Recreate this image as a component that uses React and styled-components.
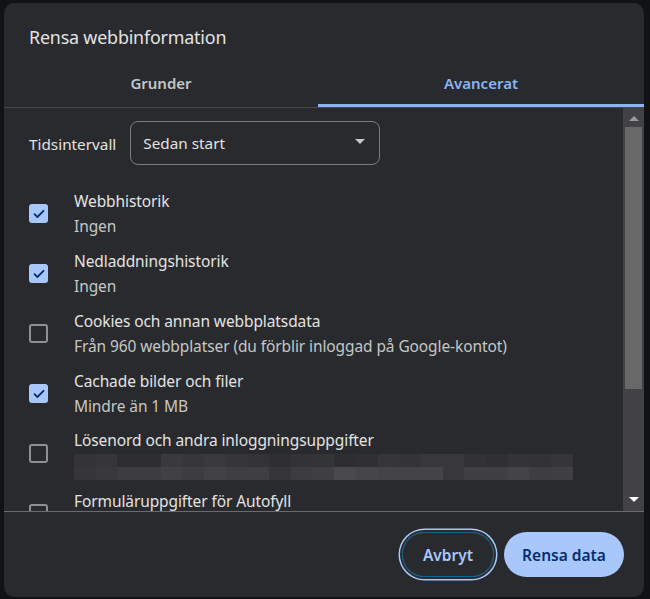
import React from "react";
import styled, { createGlobalStyle } from "styled-components";

const GlobalStyle = createGlobalStyle`
  html, body {
    margin: 0;
    padding: 0;
    background: #111213;
    font-family: "Noto Sans", "Open Sans", Arial, sans-serif;
  }
`;

const items = [
  { title: "Webbhistorik", sub: "Ingen", checked: true },
  { title: "Nedladdningshistorik", sub: "Ingen", checked: true },
  {
    title: "Cookies och annan webbplatsdata",
    sub: "Från 960 webbplatser (du förblir inloggad på Google-kontot)",
    checked: false,
  },
  { title: "Cachade bilder och filer", sub: "Mindre än 1 MB", checked: true },
  { title: "Lösenord och andra inloggningsuppgifter", redacted: true, checked: false },
  { title: "Formuläruppgifter för Autofyll", sub: "", checked: false },
];

// shades for the pixelated (redacted) line
const pixelRows = [
  [0x34, 0x36, 0x2e, 0x2e, 0x3a, 0x37, 0x3a, 0x36, 0x34, 0x2f, 0x33, 0x34, 0x2e, 0x30, 0x36, 0x34, 0x38, 0x38, 0x32, 0x30, 0x34, 0x33, 0x36],
  [0x36, 0x39, 0x3d, 0x3d, 0x41, 0x3d, 0x42, 0x3f, 0x3f, 0x36, 0x3d, 0x3f, 0x4a, 0x46, 0x44, 0x43, 0x44, 0x38, 0x40, 0x40, 0x44, 0x3e, 0x40],
];

const Check = () => (
  <svg width="12" height="10" viewBox="0 0 12 10">
    <path d="M1.5 5.2 L4.4 8 L10.5 1.8" fill="none" stroke="#062e6f" strokeWidth="1.8" strokeLinecap="round" strokeLinejoin="round" />
  </svg>
);

const App = () => {
  return (
    <>
      <GlobalStyle />
      <Screen>
        <Dialog>
          <Title>Rensa webbinformation</Title>
          <Tabs>
            <Tab>Grunder</Tab>
            <Tab active>Avancerat</Tab>
          </Tabs>
          <Body>
            <Scroll>
              <RangeRow>
                <RangeLabel>Tidsintervall</RangeLabel>
                <Select>
                  <span>Sedan start</span>
                  <Caret />
                </Select>
              </RangeRow>
              {items.map((it) => (
                <Item key={it.title}>
                  <Box checked={it.checked}>{it.checked && <Check />}</Box>
                  <Texts>
                    <ItemTitle>{it.title}</ItemTitle>
                    {it.redacted ? (
                      <Pixels>
                        {pixelRows.map((row, r) => (
                          <PixelRow key={r}>
                            {row.map((v, i) => (
                              <Pixel key={i} style={{ background: `rgb(${v},${v},${v + 3})` }} />
                            ))}
                          </PixelRow>
                        ))}
                      </Pixels>
                    ) : (
                      <ItemSub>{it.sub}</ItemSub>
                    )}
                  </Texts>
                </Item>
              ))}
            </Scroll>
            <Scrollbar>
              <Arrow />
              <Track>
                <Thumb />
              </Track>
              <Arrow down />
            </Scrollbar>
          </Body>
          <Footer>
            <CancelButton>Avbryt</CancelButton>
            <PrimaryButton>Rensa data</PrimaryButton>
          </Footer>
        </Dialog>
      </Screen>
    </>
  );
};

export default App;

const Screen = styled.div`
  width: 650px;
  height: 599px;
  overflow: hidden;
  padding: 3px 0 0 4px;
  box-sizing: border-box;
`;

const Dialog = styled.div`
  width: 640px;
  height: 594px;
  background: #292a2d;
  border-radius: 10px;
  display: flex;
  flex-direction: column;
  overflow: hidden;
`;

const Title = styled.div`
  height: 62px;
  box-sizing: border-box;
  padding: 22px 0 0 25px;
  font-size: 17.9px;
  color: #e3e3e3;
  letter-spacing: -0.2px;
`;

const Tabs = styled.div`
  display: grid;
  grid-template-columns: 314px 1fr;
  height: 42px;
  border-bottom: 1px solid #47484b;
`;

const Tab = styled.div`
  display: flex;
  align-items: center;
  justify-content: center;
  font-size: 15px;
  font-weight: 600;
  color: ${(p) => (p.active ? "#8ab4f8" : "#c4c7c5")};
  border-bottom: 3px solid ${(p) => (p.active ? "#8ab4f8" : "transparent")};
  padding-bottom: 3px;
`;

const Body = styled.div`
  display: flex;
  height: 403px;
  border-bottom: 1px solid #6a6b6e;
`;

const Scroll = styled.div`
  flex: 1;
  overflow: hidden;
  padding: 13px 0 0 25px;
`;

const RangeRow = styled.div`
  display: flex;
  align-items: center;
  gap: 14px;
`;

const RangeLabel = styled.div`
  font-size: 15.3px;
  color: #e3e3e3;
  margin-top: 1px;
`;

const Select = styled.div`
  width: 250px;
  height: 44px;
  box-sizing: border-box;
  border: 1px solid #7b7c7f;
  border-radius: 8px;
  display: flex;
  align-items: center;
  justify-content: space-between;
  padding: 0 14px 0 12px;
  font-size: 15.3px;
  color: #e3e3e3;
`;

const Caret = styled.span`
  width: 0;
  height: 0;
  border-left: 5px solid transparent;
  border-right: 5px solid transparent;
  border-top: 5px solid #c4c7c5;
  margin-top: -3px;
`;

const Item = styled.div`
  display: flex;
  align-items: center;
  gap: 26px;
  height: 60px;
  ${RangeRow} + & {
    margin-top: 19px;
  }
`;

const Box = styled.div`
  width: 19px;
  height: 19px;
  box-sizing: border-box;
  border-radius: 3px;
  flex-shrink: 0;
  display: flex;
  align-items: center;
  justify-content: center;
  background: ${(p) => (p.checked ? "#a8c7fa" : "transparent")};
  border: ${(p) => (p.checked ? "none" : "2px solid #8e9091")};
  margin-top: -1px;
`;

const Texts = styled.div`
  display: flex;
  flex-direction: column;
`;

const ItemTitle = styled.div`
  font-size: 15.5px;
  line-height: 25px;
  color: #e3e3e3;
  letter-spacing: -0.1px;
`;

const ItemSub = styled.div`
  font-size: 15.5px;
  line-height: 25px;
  height: 25px;
  color: #c4c7c5;
  letter-spacing: -0.1px;
`;

const Pixels = styled.div`
  display: flex;
  flex-direction: column;
  margin-top: 1px;
`;

const PixelRow = styled.div`
  display: flex;
`;

const Pixel = styled.div`
  width: 21.7px;
  height: 13px;
  flex-shrink: 0;
`;

const Scrollbar = styled.div`
  width: 21px;
  background: #424244;
  display: flex;
  flex-direction: column;
  align-items: center;
`;

const Arrow = styled.div`
  width: 0;
  height: 0;
  margin: ${(p) => (p.down ? "7px 0 9px" : "8px 0 6px")};
  border-left: 5px solid transparent;
  border-right: 5px solid transparent;
  ${(p) => (p.down ? "border-top: 5px solid #ffffff;" : "border-bottom: 5px solid #9a9a9a;")}
`;

const Track = styled.div`
  flex: 1;
  width: 100%;
  padding: 0 2px;
  box-sizing: border-box;
`;

const Thumb = styled.div`
  height: 262px;
  background: #686868;
`;

const Footer = styled.div`
  flex: 1;
  display: flex;
  justify-content: flex-end;
  align-items: flex-start;
  gap: 10px;
  padding: 20px 20px 0 0;
`;

const BaseButton = styled.button`
  height: 45px;
  border-radius: 23px;
  font-family: "Noto Sans", "Open Sans", Arial, sans-serif;
  font-size: 15.5px;
  font-weight: 600;
  padding: 0;
  white-space: nowrap;
  cursor: pointer;
`;

const CancelButton = styled(BaseButton)`
  width: 92px;
  background: transparent;
  color: #a8c7fa;
  border: 1px solid #0b6a8c;
  box-shadow: 0 0 0 2px #292a2d, 0 0 0 3.5px #a8c7fa;
`;

const PrimaryButton = styled(BaseButton)`
  width: 120px;
  background: #a8c7fa;
  color: #062e6f;
  border: none;
`;
